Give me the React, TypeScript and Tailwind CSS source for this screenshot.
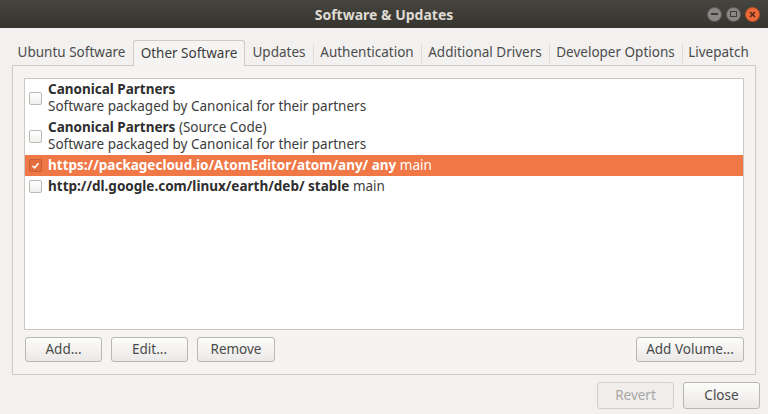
import React from 'react'

const FONT = { fontFamily: '"Noto Sans", "Open Sans", sans-serif' }

const tabs = [
	{ label: 'Ubuntu Software', w: 'w-[117px]' },
	{ label: 'Other Software', w: 'w-[112px]', active: true },
	{ label: 'Updates', w: 'w-[68px]' },
	{ label: 'Authentication', w: 'w-[108px]' },
	{ label: 'Additional Drivers', w: 'w-[128px]' },
	{ label: 'Developer Options', w: 'w-[133px]' },
	{ label: 'Livepatch', w: 'w-[73px]' }
]

const Checkbox = ({ checked, onDark }: { checked?: boolean; onDark?: boolean }) => (
	<span
		className={`flex-shrink-0 w-[13px] h-[13px] rounded-[2px] border flex items-center justify-center ${
			onDark ? 'border-[#c65f34] bg-[#e46d3d]' : 'border-[#bdb9b4] bg-gradient-to-b from-[#ffffff] to-[#f1f0ef]'
		}`}>
		{checked && (
			<svg width="9" height="9" viewBox="0 0 9 9">
				<path d="M1.5 4.8 L3.6 6.8 L7.6 2.2" fill="none" stroke="#ffffff" strokeWidth="1.6" />
			</svg>
		)}
	</span>
)

const Button = ({ children, w, disabled }: { children: React.ReactNode; w: string; disabled?: boolean }) => (
	<div
		className={`${w} flex items-center justify-center rounded-[3px] border text-[13.5px] ${
			disabled
				? 'border-[#d2cfcb] bg-[#efeeed] text-[#a8a6a3]'
				: 'border-[#bab6b1] bg-gradient-to-b from-[#fcfcfb] to-[#ebe9e7] text-[#4a4a4a]'
		}`}>
		{children}
	</div>
)

export default function App() {
	return (
		<div className="w-[768px] h-[414px] bg-[#f2f1f0] flex flex-col overflow-hidden" style={FONT}>
			{/* title bar */}
			<div className="h-[28px] flex-shrink-0 bg-gradient-to-b from-[#46453f] to-[#35342f] grid grid-cols-[1fr_auto_1fr] items-center">
				<div />
				<span className="text-[14px] font-bold text-[#dfdbd2]">Software &amp; Updates</span>
				<div className="flex justify-end items-center gap-[4px] pr-[8px]">
					<span className="w-[15px] h-[15px] rounded-full bg-[#8a8884] border border-[#5c5a56] flex items-center justify-center">
						<span className="w-[7px] h-[2px] bg-[#3c3b37]" />
					</span>
					<span className="w-[15px] h-[15px] rounded-full bg-[#8a8884] border border-[#5c5a56] flex items-center justify-center">
						<span className="w-[7px] h-[6px] border border-[#3c3b37]" />
					</span>
					<span className="w-[15px] h-[15px] rounded-full bg-[#ed6a3a] border border-[#b94f27] flex items-center justify-center">
						<svg width="7" height="7" viewBox="0 0 7 7">
							<path d="M1 1 L6 6 M6 1 L1 6" stroke="#4a2315" strokeWidth="1.4" />
						</svg>
					</span>
				</div>
			</div>

			{/* body */}
			<div className="flex-1 flex flex-col px-[12px] pt-[12px]">
				{/* tabs */}
				<div className="flex h-[25px] pl-[1px] relative z-10">
					{tabs.map((t, i) =>
						t.active ? (
							<div
								key={t.label}
								className={`${t.w} ml-[3px] h-[26px] flex items-center justify-center rounded-t-[3px] border border-b-0 border-[#cfcac5] bg-[#f5f4f3] text-[13.5px] text-[#3c3c3c]`}>
								{t.label}
							</div>
						) : (
							<div key={t.label} className={`${t.w} h-[25px] flex items-center justify-center relative text-[13.5px] text-[#4c4c4c]`}>
								{t.label}
								{i > 2 && <span className="absolute left-0 top-[4px] bottom-[2px] w-px bg-[#dedad6]" />}
							</div>
						)
					)}
				</div>

				{/* frame */}
				<div className="w-[744px] h-[310px] border border-[#cfcac5] bg-[#f5f4f3] flex flex-col px-[11px] pt-[12px]">
					<div className="h-[252px] bg-white border border-[#cdc8c3] flex flex-col">
						<div className="flex items-center gap-[6px] pl-[4px] py-[2px] leading-[17px] text-[13.5px] text-[#3c3c3c]">
							<Checkbox />
							<div>
								<div className="font-bold text-[#2e2e2e]">Canonical Partners</div>
								<div>Software packaged by Canonical for their partners</div>
							</div>
						</div>
						<div className="flex items-center gap-[6px] pl-[4px] py-[2px] leading-[17px] text-[13.5px] text-[#3c3c3c]">
							<Checkbox />
							<div>
								<div>
									<span className="font-bold text-[#2e2e2e]">Canonical Partners</span> (Source Code)
								</div>
								<div>Software packaged by Canonical for their partners</div>
							</div>
						</div>
						<div className="flex items-center gap-[6px] pl-[4px] py-[2px] leading-[17px] text-[13.5px] text-white bg-[#f07746]">
							<Checkbox checked onDark />
							<div>
								<span className="font-bold">https://packagecloud.io/AtomEditor/atom/any/ any</span> main
							</div>
						</div>
						<div className="flex items-center gap-[6px] pl-[4px] py-[2px] leading-[17px] text-[13.5px] text-[#3c3c3c]">
							<Checkbox />
							<div>
								<span className="font-bold text-[#2e2e2e]">http://dl.google.com/linux/earth/deb/ stable</span> main
							</div>
						</div>
					</div>
					<div className="flex h-[25px] mt-[7px] pl-[1px]">
						<div className="flex gap-[9px]">
							<Button w="w-[77px]">Add...</Button>
							<Button w="w-[77px]">Edit...</Button>
							<Button w="w-[78px]">Remove</Button>
						</div>
						<div className="flex-1" />
						<Button w="w-[108px]">Add Volume...</Button>
					</div>
				</div>

				{/* dialog buttons */}
				<div className="flex justify-end mt-[7px] mr-[-4px]">
					<div className="flex h-[27px] gap-[9px]">
						<Button w="w-[77px]" disabled>
							Revert
						</Button>
						<Button w="w-[77px]">Close</Button>
					</div>
				</div>
			</div>
		</div>
	)
}
